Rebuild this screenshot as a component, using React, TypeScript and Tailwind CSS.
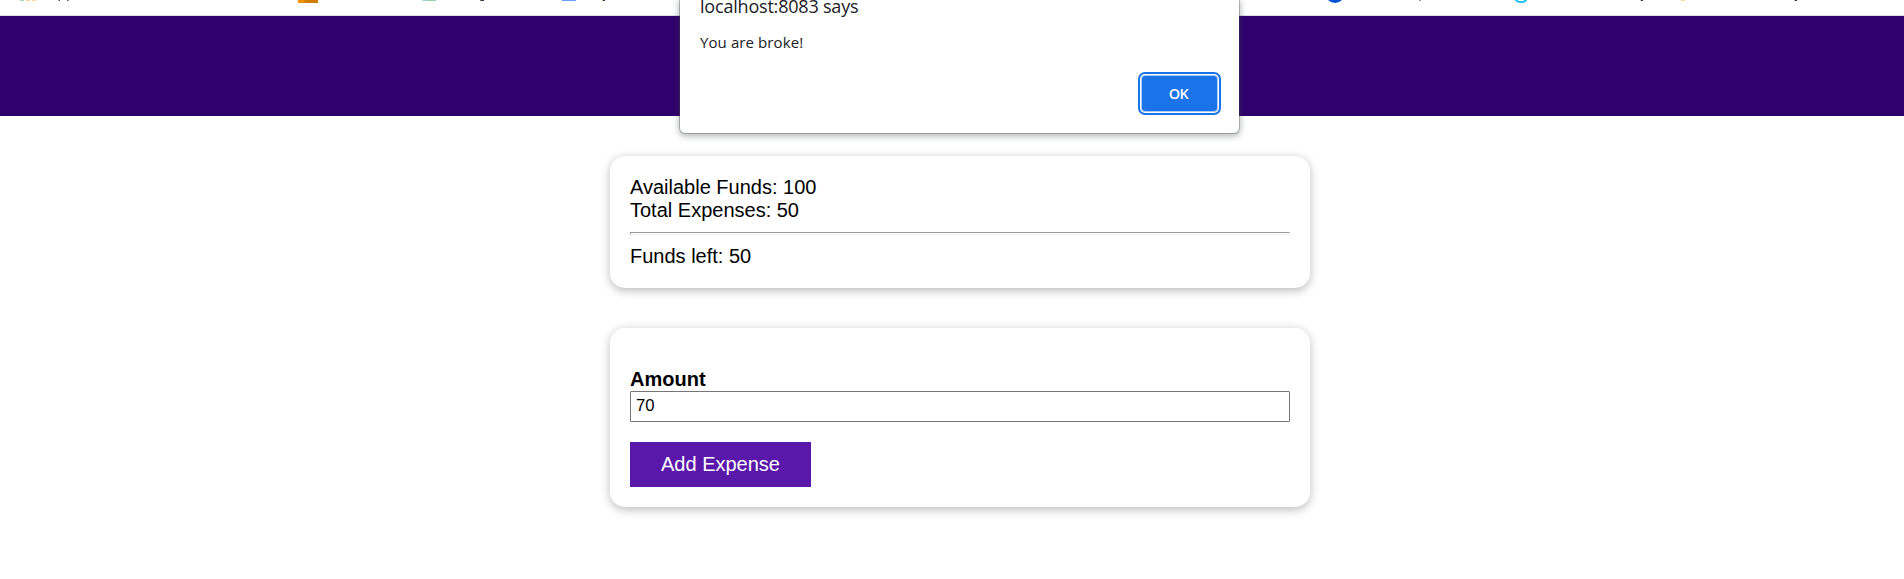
import React, { useState } from "react";

function BookmarksBar() {
  return (
    <div className="flex h-4 items-start border-b border-[#dadce0] bg-white" aria-hidden="true">
      <span className="ml-5 h-px w-1 bg-[#a0d6b4]" />
      <span className="ml-0.5 h-px w-1 bg-[#fbd58c]" />
      <span className="ml-0.5 h-px w-1 bg-[#fbd58c]" />
      <span className="ml-[22px] h-px w-px bg-[#d9a25f]" />
      <span className="h-px w-px bg-[#3c4a86]" />
      <span className="ml-[7px] h-px w-px bg-[#6a4a4a]" />
      <span className="h-px w-px bg-[#7db4e0]" />
      <span className="ml-[229px] flex h-[3px] w-5 bg-[#f29100]">
        <span className="ml-1.5 h-[3px] w-3.5 rounded-bl-sm bg-[#d07c05]" />
      </span>
      <span className="ml-[104px] h-px w-1 bg-[#a9d3f0]" />
      <span className="h-px w-2.5 bg-[#97d3a4]" />
      <span className="ml-11 h-px w-1 bg-[#b8763a]" />
      <span className="-ml-[3px] h-px w-[3px] bg-[#2c3a66]" />
      <span className="ml-[78px] h-px w-3.5 bg-[#6ba2f8]" />
      <span className="ml-[26px] h-px w-px bg-[#f0b860]" />
      <span className="h-px w-0.5 bg-[#2c2c66]" />
      <svg className="ml-[723px] h-[3px] w-3.5" viewBox="0 0 14 3">
        <path d="M0 0H14Q11 3 7 3Q3 3 0 0Z" fill="#0052d4" />
      </svg>
      <span className="ml-[77px] h-px w-px bg-[#b8864a]" />
      <span className="h-px w-px bg-[#7db4e0]" />
      <svg className="ml-[94px] h-[3px] w-3" viewBox="0 0 12 3">
        <path d="M0.5 0Q3 2.1 6 2.1Q9 2.1 11.5 0" fill="none" stroke="#0fbdf0" strokeWidth="1.8" />
      </svg>
      <span className="ml-[113px] h-px w-px bg-[#f0b860]" />
      <span className="h-px w-0.5 bg-[#34386c]" />
      <span className="ml-[38px] h-px w-1 bg-[#fbdc8c]" />
      <span className="ml-[109px] h-px w-px bg-[#f0b860]" />
      <span className="h-px w-0.5 bg-[#34386c]" />
    </div>
  );
}

function AlertDialog() {
  return (
    <div
      role="alertdialog"
      className="absolute top-0 left-[680px] h-[133px] w-[559px] rounded-b-[5px] bg-white pr-[19px] pl-5 font-['Open_Sans',sans-serif] text-[#202124] shadow-[0_0_0_1px_rgba(60,64,67,0.3),0_2px_6px_1px_rgba(60,64,67,0.4)]"
    >
      <h2 className="-mt-[7px] h-[27px] text-[18px] leading-[27px] tracking-[-0.2px] whitespace-nowrap">
        localhost:8083 says
      </h2>
      <p className="mt-[11px] h-[23px] text-[15px] leading-[23px] tracking-[0.1px]">You are broke!</p>
      <div className="mt-[21px] flex justify-end pr-[2px]">
        <button className="h-[37px] w-[77px] rounded-[4px] border border-[#a9cbf9] bg-[#1a73e8] pr-0.5 text-[14.5px] font-semibold tracking-[-0.6px] text-white shadow-[0_0_0_1px_white,0_0_0_3px_#1a73e8]">
          OK
        </button>
      </div>
    </div>
  );
}

function Card({ children }: { children: React.ReactNode }) {
  return (
    <section className="mx-auto mt-10 w-[700px] rounded-[15px] bg-white p-5 shadow-[0_2.5px_10px_rgba(0,0,0,0.26)]">
      {children}
    </section>
  );
}

export default function App() {
  const [amount, setAmount] = useState("70");
  return (
    <div className="relative h-[579px] overflow-hidden bg-white font-['Liberation_Sans',Arial,sans-serif] text-[20px] leading-[23px] text-black">
      <BookmarksBar />
      <header className="h-[100px] bg-[#30006e]" />
      <main className="pl-4">
        <Card>
          <div>Available Funds: 100</div>
          <div>Total Expenses: 50</div>
          <hr className="my-2.5 h-[3px] border border-t-[#9a9a9a] border-r-[#eeeeee] border-b-[#eeeeee] border-l-[#9a9a9a]" />
          <div>Funds left: 50</div>
        </Card>
        <Card>
          <label htmlFor="amount" className="mt-5 block font-bold">
            Amount
          </label>
          <input
            id="amount"
            value={amount}
            onChange={(e) => setAmount(e.target.value)}
            className="block h-[31px] w-full rounded-[1px] border border-[#767676] px-[5px] pb-0.5 text-[16.67px] outline-none"
          />
          <button className="mt-5 block h-[45px] w-[181px] bg-[#5a18ab] text-white">Add Expense</button>
        </Card>
      </main>
      <AlertDialog />
    </div>
  );
}
